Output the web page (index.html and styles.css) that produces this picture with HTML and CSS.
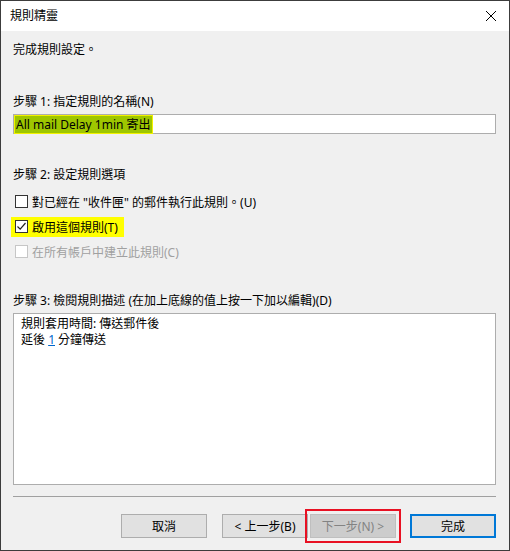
FILE: index.html
```html
<!DOCTYPE html>
<html lang="zh-Hant">
  <head>
    <meta charset="UTF-8" />
    <title>規則精靈</title>
    <link rel="stylesheet" href="styles.css">
  </head>
  <body>
    <div class="window">
      <div class="titlebar">
        <span class="title">規則精靈</span>
        <svg class="close" width="12" height="12" viewBox="0 0 12 12">
          <path d="M1 1 L11 11 M11 1 L1 11" stroke="#000" stroke-width="1" fill="none" />
        </svg>
      </div>
      <div class="content">
        <div class="intro">完成規則設定。</div>

        <div class="label step1">步驟 1: 指定規則的名稱(N)</div>
        <div class="textbox">
          <span class="marked">All mail Delay 1min 寄出</span>
        </div>

        <div class="label step2">步驟 2: 設定規則選項</div>
        <div class="options">
          <div class="option">
            <span class="check"></span>
            <span>對已經在 "收件匣" 的郵件執行此規則。(U)</span>
          </div>
          <div class="option">
            <span class="hilite">
              <span class="check">
                <svg width="11" height="11" viewBox="0 0 11 11">
                  <path d="M1.5 5.5 L4.2 8.2 L9.5 2" stroke="#222" stroke-width="1.2" fill="none" />
                </svg>
              </span>
              <span>啟用這個規則(T)</span>
            </span>
          </div>
          <div class="option disabled">
            <span class="check"></span>
            <span>在所有帳戶中建立此規則(C)</span>
          </div>
        </div>

        <div class="label step3">步驟 3: 檢閱規則描述 (在加上底線的值上按一下加以編輯)(D)</div>
        <div class="desc">
          <div>規則套用時間: 傳送郵件後</div>
          <div>延後 <a class="val" href="#">1</a> 分鐘傳送</div>
        </div>

        <div class="separator"></div>

        <div class="buttons">
          <button class="btn">取消</button>
          <button class="btn back">&lt; 上一步(B)</button>
          <button class="btn next" disabled>下一步(N) &gt;</button>
          <button class="btn finish">完成</button>
        </div>
      </div>
    </div>
  </body>
</html>
```

FILE: styles.css
```css
* {
  box-sizing: border-box;
}
body {
  margin: 0;
  font-family: "Noto Sans", "Noto Sans CJK TC", sans-serif;
  font-size: 12px;
  color: #000;
}
.window {
  width: 510px;
  height: 551px;
  border: 1px solid #3c3c3c;
  background: #f0f0f0;
  display: flex;
  flex-direction: column;
}
.titlebar {
  height: 30px;
  background: #fff;
  display: flex;
  align-items: center;
  justify-content: space-between;
  padding: 0 12px 0 9px;
}
.title {
  line-height: 16px;
}
.close {
  display: block;
}
.content {
  flex: 1;
  padding: 11px 13px 0 12px;
  display: flex;
  flex-direction: column;
}
.intro,
.label {
  line-height: 16px;
  height: 16px;
}
.step1 {
  margin-top: 36px;
}
.textbox {
  margin-top: 4px;
  height: 20px;
  background: #fff;
  border: 1px solid #adadad;
  padding: 0 1px;
  display: flex;
  align-items: center;
}
.marked {
  background: #9ec600;
  box-shadow: 0 0 0 1px #f2f200;
  line-height: 17px;
  padding: 0 1px;
  white-space: nowrap;
}
.step2 {
  margin-top: 33px;
}
.options {
  margin-top: 6px;
}
.option {
  height: 25px;
  display: flex;
  align-items: center;
  padding-left: 2px;
  white-space: nowrap;
}
.check {
  width: 13px;
  height: 13px;
  border: 1px solid #333;
  background: #fff;
  margin-right: 4px;
  display: inline-flex;
  align-items: center;
  justify-content: center;
  flex: none;
}
.check svg {
  display: block;
}
.hilite {
  display: inline-flex;
  align-items: center;
  background: #ffff00;
  height: 20px;
  margin-left: -4px;
  padding: 0 6px 0 4px;
}
.disabled {
  color: #a0a0a0;
}
.disabled .check {
  border-color: #c6c6c6;
}
.step3 {
  margin-top: 29px;
}
.desc {
  margin-top: 4px;
  height: 172px;
  background: #fff;
  border: 1px solid #adadad;
  padding: 2px 7px;
  line-height: 16px;
}
.val {
  color: #0066cc;
  text-decoration: underline;
}
.separator {
  margin-top: 11px;
  height: 1px;
  background: #a0a0a0;
}
.buttons {
  margin-top: 17px;
  display: flex;
  justify-content: flex-end;
}
.btn {
  width: 86px;
  height: 24px;
  font: inherit;
  color: #000;
  background: #e1e1e1;
  border: 1px solid #adadad;
  padding: 0;
  margin-left: 14px;
}
.back {
  margin-left: 15px;
}
.next {
  margin-left: 2px;
  color: #838383;
  background: #cccccc;
  border-color: #bfbfbf;
  outline: 2px solid #e81123;
  outline-offset: 3px;
}
.finish {
  border: 2px solid #0078d7;
}
```
